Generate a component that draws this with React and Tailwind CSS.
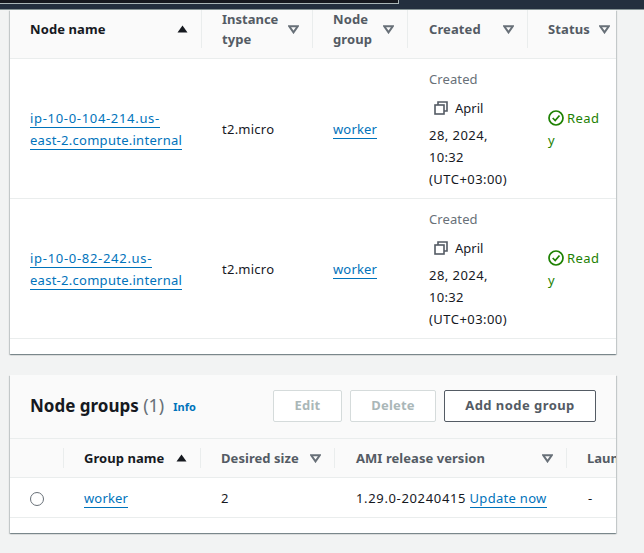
function Caret({ up, className = "" }) {
  return up ? (
    <svg width="11" height="8" viewBox="0 0 11 8" className={className}><path d="M5.5 0.5 L10.5 7.5 L0.5 7.5 Z" fill="#16191f" /></svg>
  ) : (
    <svg width="11" height="9" viewBox="0 0 11 9" className={className}><path d="M1.2 1.2 H9.8 L5.5 7.4 Z" fill="none" stroke="#687078" strokeWidth="2" strokeLinejoin="miter" /></svg>
  );
}
function Th({ w, children, up, dark, last, pl = "pl-5" }) {
  return (
    <div className={`${w} shrink-0 h-[38px] flex items-center justify-between ${pl} ${last ? "pr-[6px]" : "pr-[13px] border-r border-[#eaeded]"} text-[13px] leading-[20px] font-bold tracking-[0.1px] ${dark ? "text-[#16191f]" : "text-[#545b64]"}`}>
      <div>{children}</div>
      <Caret up={up} className="shrink-0" />
    </div>
  );
}
function ThSmall({ w, children, up, dark, pl = "pl-5" }) {
  return (
    <div className={`${w} shrink-0 h-[20px] flex items-center justify-between ${pl} pr-[13px] border-r border-[#eaeded] text-[13px] leading-[20px] font-bold tracking-[0.05px] ${dark ? "text-[#16191f]" : "text-[#545b64]"}`}>
      <div className="whitespace-nowrap">{children}</div>
      <Caret up={up} className="shrink-0" />
    </div>
  );
}
function Link({ children }) {
  return <a className="text-[#0073bb] border-b border-[#0073bb]">{children}</a>;
}
function Row({ name1, track1 }) {
  return (
    <div className="flex h-[140px] items-center border-b border-[#eaeded] text-[13px] leading-[22px] text-[#16191f]">
      <div className="w-[192px] shrink-0 pl-5 whitespace-nowrap">
        <Link><span className={track1}>{name1}</span><br /><span className="tracking-[0.27px]">east-2.compute.internal</span></Link>
      </div>
      <div className="w-[111px] shrink-0 pl-5 tracking-[0.25px]">t2.micro</div>
      <div className="w-[95px] shrink-0 pl-5 tracking-[0.15px]"><Link>worker</Link></div>
      <div className="w-[120px] shrink-0 pl-[21px] whitespace-nowrap">
        <div className="text-[#687078] mb-[7px] tracking-[0.1px]">Created</div>
        <div className="flex items-center h-[22px] mb-[5px] pl-[5px]">
          <svg width="14" height="14" viewBox="0 0 14 14" fill="none" stroke="#545b64" strokeWidth="1.6" className="mr-[7px]"><rect x="1" y="4" width="9" height="9" /><path d="M4 4 V1 H13 V10 H10" /></svg>
          April
        </div>
        <div className="tracking-[0.45px]">28, 2024,</div>
        <div className="tracking-[0.3px]">10:32</div>
        <div className="tracking-[0.45px]">(UTC+03:00)</div>
      </div>
      <div className="w-[88px] shrink-0 pl-5 text-[#1d8102]">
        <div className="flex items-center tracking-[0.4px]">
          <svg width="16" height="16" viewBox="0 0 16 16" fill="none" stroke="#1d8102" strokeWidth="1.7" className="mr-[3px]"><circle cx="8" cy="8" r="7" /><path d="M4.7 8 L7.2 10.5 L11.5 5.5" /></svg>
          Read
        </div>
        <div>y</div>
      </div>
    </div>
  );
}
const cardShadow = "shadow-[0_1px_1px_0_rgba(0,28,36,0.3),1px_1px_1px_0_rgba(0,28,36,0.15),-1px_1px_1px_0_rgba(0,28,36,0.15)]";
export default function App() {
  return (
    <div className="w-[644px] h-[553px] overflow-hidden bg-[#f2f3f3] flex flex-col" style={{ fontFamily: '"Noto Sans", sans-serif' }}>
      <div className="h-[10px] shrink-0 bg-[#232f3e] border-b border-[#879596] relative overflow-hidden">
        <div className="absolute left-0 top-0 h-[4px] w-[399px] border-b border-r border-[#aab7b8] bg-[#16191f]" />
      </div>
      <div className={`ml-[10px] w-[606px] h-[344px] shrink-0 bg-white ${cardShadow}`}>
        <div className="flex h-[49px] items-start bg-[#fafafa] border-b border-[#eaeded]">
          <Th w="w-[192px]" up dark>Node name</Th>
          <Th w="w-[111px]"><span className="tracking-normal">Instance</span><br />type</Th>
          <Th w="w-[95px]">Node<br />group</Th>
          <Th w="w-[120px]" pl="pl-[21px]">Created</Th>
          <Th w="w-[88px]" last>Status</Th>
        </div>
        <Row name1="ip-10-0-104-214.us-" track1="tracking-[0.68px]" />
        <Row name1="ip-10-0-82-242.us-" track1="tracking-[0.7px]" />
      </div>
      <div className={`ml-[10px] mt-[21px] w-[606px] h-[158px] shrink-0 bg-white overflow-hidden ${cardShadow}`}>
        <div className="h-[64px] bg-[#fafafa] border-b border-[#eaeded] flex items-center pl-5 pr-5 pb-[2px]">
          <div className="text-[17px] font-bold text-[#16191f] leading-[22px] -mt-[1px] whitespace-nowrap">Node groups <span className="font-normal text-[#687078] text-[18px]">(1)</span></div>
          <a className="ml-[9px] text-[11px] font-bold text-[#0073bb] mt-[3px]">Info</a>
          <div className="ml-auto flex gap-2">
            <button className="w-[69px] h-[32px] border border-[#d5dbdb] bg-white rounded-[2px] text-[13px] font-bold text-[#aab7b8] tracking-[0.2px]">Edit</button>
            <button className="w-[86px] h-[32px] border border-[#d5dbdb] bg-white rounded-[2px] text-[13px] font-bold text-[#aab7b8] tracking-[0.2px]">Delete</button>
            <button className="w-[152px] h-[32px] border border-[#545b64] bg-white rounded-[2px] text-[13px] font-bold text-[#545b64] tracking-[0.45px]">Add node group</button>
          </div>
        </div>
        <div className="h-[39px] bg-[#fafafa] border-b border-[#eaeded] flex items-start pt-[9px] overflow-hidden">
          <div className="w-[54px] h-[20px] shrink-0 border-r border-[#eaeded]" />
          <ThSmall w="w-[137px]" up dark>Group name</ThSmall>
          <ThSmall w="w-[134px]">Desired size</ThSmall>
          <ThSmall w="w-[232px]" pl="pl-[21px]">AMI release version</ThSmall>
          <div className="pl-5 text-[13px] leading-[20px] font-bold text-[#545b64] whitespace-nowrap">Launch template</div>
        </div>
        <div className="flex h-[40px] items-center border-b border-[#eaeded] text-[13px] text-[#16191f] pt-[2px]">
          <div className="w-[54px] shrink-0 pl-5"><div className="w-[14px] h-[14px] rounded-full border border-[#687078] bg-white" /></div>
          <div className="w-[137px] shrink-0 pl-5 tracking-[0.15px]"><Link>worker</Link></div>
          <div className="w-[134px] shrink-0 pl-5">2</div>
          <div className="w-[232px] shrink-0 pl-[21px] whitespace-nowrap"><span className="tracking-[0.65px]">1.29.0-20240415</span> <span className="tracking-[0.3px]"><Link>Update now</Link></span></div>
          <div className="pl-[21px]">-</div>
        </div>
      </div>
    </div>
  );
}
